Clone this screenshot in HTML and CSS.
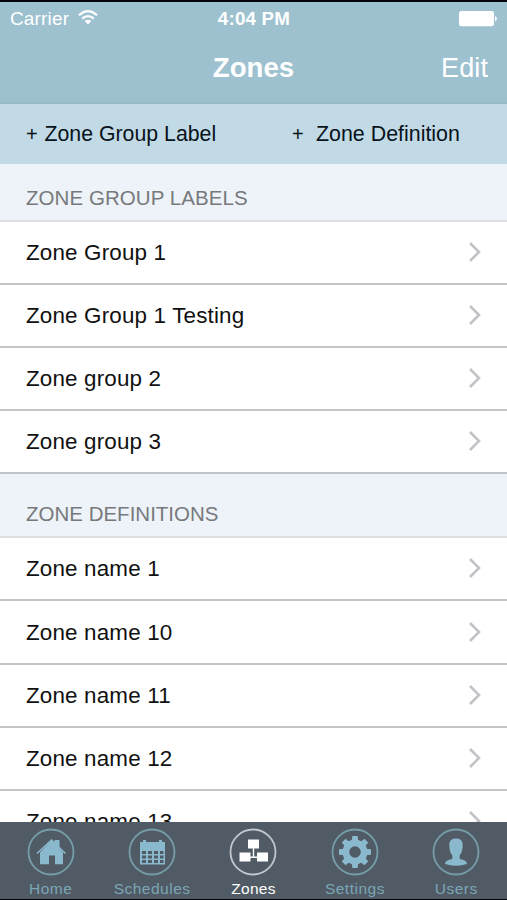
FILE: index.html
```html
<!DOCTYPE html>
<html lang="en">
<head>
<meta charset="utf-8">
<title>Zones</title>
<link rel="stylesheet" href="styles.css">
</head>
<body>
<svg width="0" height="0" class="defs"><defs>
<symbol id="chevron" viewBox="0 0 14 22"><path d="M2 2L11 11L2 20" fill="none" stroke="#c3c3c7" stroke-width="2.6"/></symbol>
</defs></svg>
<div class="app">
  <header class="top">
    <div class="status">
      <div class="carrier"><span>Carrier</span>
        <svg width="20" height="15" viewBox="0 0 20 15"><g fill="none" stroke="#fff" stroke-width="2.2"><path d="M1 5.2Q10-2.8 19 5.2"/><path d="M4.2 8.6Q10 3.6 15.8 8.6"/></g><path d="M6.7 11Q10 8.4 13.3 11L10 14.4Z" fill="#fff"/></svg>
      </div>
      <div class="time">4:04 PM</div>
      <svg class="battery" width="39" height="16" viewBox="0 0 39 16"><rect width="35" height="15.3" rx="2.4" fill="#fff"/><path d="M36 5Q40 7.7 36 10.4Z" fill="#fff"/></svg>
    </div>
    <div class="nav"><h1>Zones</h1><span class="edit">Edit</span></div>
  </header>
  <div class="actions">
    <div class="action"><span class="plus">+</span><span class="group-label">Zone Group Label</span></div>
    <div class="action second"><span class="plus">+</span><span>Zone Definition</span></div>
  </div>
  <main class="list">
    <h2 class="first">ZONE GROUP LABELS</h2>
    <div class="row"><span>Zone Group 1</span><svg><use href="#chevron"/></svg></div>
    <div class="row"><span>Zone Group 1 Testing</span><svg><use href="#chevron"/></svg></div>
    <div class="row"><span>Zone group 2</span><svg><use href="#chevron"/></svg></div>
    <div class="row"><span>Zone group 3</span><svg><use href="#chevron"/></svg></div>
    <h2>ZONE DEFINITIONS</h2>
    <div class="row"><span>Zone name 1</span><svg><use href="#chevron"/></svg></div>
    <div class="row"><span>Zone name 10</span><svg><use href="#chevron"/></svg></div>
    <div class="row"><span>Zone name 11</span><svg><use href="#chevron"/></svg></div>
    <div class="row"><span>Zone name 12</span><svg><use href="#chevron"/></svg></div>
    <div class="row"><span>Zone name 13</span><svg><use href="#chevron"/></svg></div>
  </main>
  <nav class="tabs">
    <div class="tab"><svg viewBox="0 0 48 48"><circle class="ring" cx="24" cy="24" r="22.5"/><path d="M10 25.5L24.5 12L38.5 25.5" fill="none" stroke="currentColor" stroke-width="1.5"/><path d="M13 24.5L24.5 12L36 24.5V36.3H28V27.5H22V36.3H13Z" fill="currentColor"/><path d="M27.5 12H32.5V21L27.5 17Z" fill="currentColor"/></svg><span>Home</span></div>
    <div class="tab"><svg viewBox="0 0 48 48"><circle class="ring" cx="24" cy="24" r="22.5"/><path fill="currentColor" fill-rule="evenodd" d="M12 14H15V12H18V14H31V12H34V14H37V36.5H12ZM14 23V26H18V23ZM20 23V26H24V23ZM26 23V26H30V23ZM32 23V26H35.5V23ZM14 27.5V30.5H18V27.5ZM20 27.5V30.5H24V27.5ZM26 27.5V30.5H30V27.5ZM32 27.5V30.5H35.5V27.5ZM14 32V35H18V32ZM20 32V35H24V32ZM26 32V35H30V32ZM32 32V35H35.5V32Z"/></svg><span>Schedules</span></div>
    <div class="tab active"><svg viewBox="0 0 48 48"><circle class="ring" cx="24" cy="24" r="22.5"/><path fill="currentColor" d="M19 11.5H30V20.5H19ZM10.5 24.5H21.5V33.5H10.5ZM28 24.5H39V33.5H28Z"/><path d="M24.5 20V29.3M21 29.3H28" fill="none" stroke="currentColor" stroke-width="1.4"/></svg><span>Zones</span></div>
    <div class="tab"><svg viewBox="0 0 48 48"><circle class="ring" cx="24" cy="24" r="22.5"/><g fill="currentColor"><path fill-rule="evenodd" d="M24 11.5A12.5 12.5 0 1 1 24 36.5A12.5 12.5 0 1 1 24 11.5ZM24 18.2A5.8 5.8 0 1 0 24 29.8A5.8 5.8 0 1 0 24 18.2Z"/><g id="teeth"><path id="tooth" d="M20.8 13L21.3 8H26.7L27.2 13ZM20.8 35L21.3 40H26.7L27.2 35Z"/><use href="#tooth" transform="rotate(90 24 24)"/></g><use href="#teeth" transform="rotate(45 24 24)"/></g></svg><span>Settings</span></div>
    <div class="tab"><svg viewBox="0 0 48 48"><circle class="ring" cx="24" cy="24" r="22.5"/><path fill="currentColor" d="M24 10.5C28.5 10.5 31 13 30.7 17.5C30.5 22 29.8 25 27.7 27.2V30.7C30.2 32 34.2 31.5 35 36Q24 39.5 13 36C13.8 31.5 17.8 32 20.3 30.7V27.2C18.2 25 17.5 22 17.3 17.5C17 13 19.5 10.5 24 10.5Z"/></svg><span>Users</span></div>
  </nav>
</div>
</body>
</html>
```
FILE: styles.css
```css
* { box-sizing: border-box; }
body { margin: 0; background: #05060c; font-family: "Liberation Sans", Arial, sans-serif; }
.defs { display: none; }
.app { width: 507px; height: 899px; padding-top: 2px; display: flex; flex-direction: column; overflow: hidden; }
.top { height: 102px; background: #9ec1d0; border-bottom: 2px solid #98bac6; color: #fff; flex: none; }
.status { height: 33px; padding: 0 9px 0 10px; display: grid; grid-template-columns: 1fr auto 1fr; align-items: center; font-size: 19px; line-height: 33px; }
.carrier { display: flex; align-items: center; gap: 9px; letter-spacing: .15px; }
.carrier svg { margin-top: -3px; }
.time { font-weight: bold; font-size: 18.8px; letter-spacing: .2px; }
.battery { justify-self: end; }
.nav { height: 66px; padding: 0 19px; display: grid; grid-template-columns: 1fr auto 1fr; align-items: center; }
.nav h1 { grid-column: 2; margin: 0; font-size: 27.6px; line-height: 66px; }
.edit { justify-self: end; font-size: 27px; letter-spacing: .1px; padding-top: 1px; }
.actions { height: 60px; flex: none; display: flex; align-items: center; padding-left: 26px; background: #c2dae5; color: #08131b; font-size: 21.4px; }
.action { flex: none; width: 266px; display: flex; align-items: center; gap: 7.5px; }
.group-label { font-size: 21.3px; }
.plus { width: 11px; font-size: 20px; }
.action.second { width: auto; gap: 13px; }
.list { flex: 1; min-height: 0; overflow: hidden; background: #fff; }
h2 { margin: 0; height: 64px; padding: 16px 26px 0; background: #edf3f8; border-bottom: 2px solid #dce0e3; color: #77797c; font-size: 20.5px; font-weight: normal; line-height: 48px; }
.first { height: 58px; padding-top: 10px; letter-spacing: .06px; }
.row { height: 63.1px; padding: 1px 25px 0 26px; border-bottom: 2px solid #c3c4c7; display: flex; align-items: center; justify-content: space-between; color: #111; font-size: 22.4px; letter-spacing: .17px; }
.row svg { width: 14px; height: 22px; margin-top: -2px; }
.tabs { height: 77px; flex: none; background: #505b65; display: grid; grid-template-columns: repeat(5, 1fr); }
.tab { display: flex; flex-direction: column; align-items: center; padding-top: 6px; color: #8ab9cd; font-size: 15.5px; letter-spacing: .5px; line-height: 18px; }
.tab svg { width: 48px; height: 48px; margin-bottom: 4px; }
.tab span { color: #7ba6b5; }
.ring { fill: none; stroke: #769eaa; stroke-width: 1.8; }
.tab.active { color: #fff; }
.tab.active span { color: #fff; letter-spacing: .3px; }
.active .ring { stroke: #c2c7cd; }
```
